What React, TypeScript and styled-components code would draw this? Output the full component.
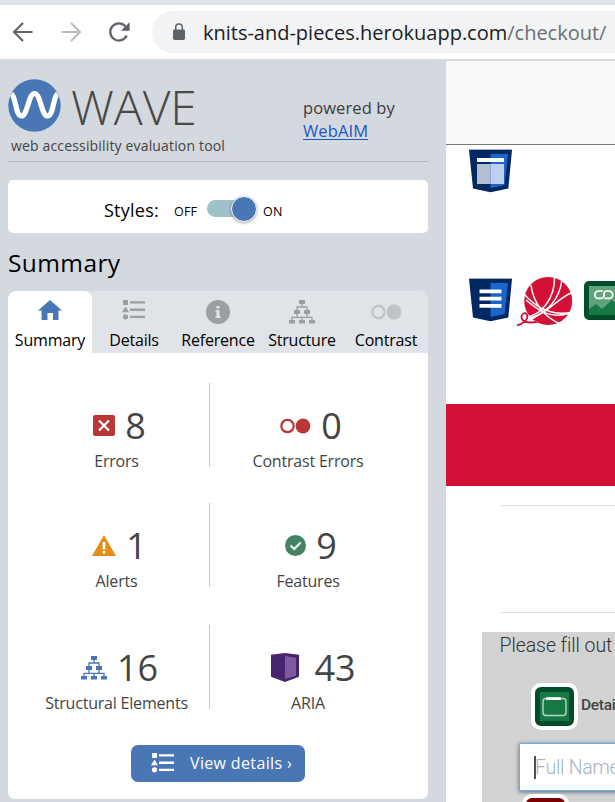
import React from "react";
import styled, { createGlobalStyle } from "styled-components";

const Global = createGlobalStyle`
  * { box-sizing: border-box; }
  body { margin: 0; background: #fff; overflow: hidden; font-family: "Open Sans", sans-serif; }
  svg { display: block; flex: none; }
`;

const Window = styled.div`
  width: 615px; height: 802px; overflow: hidden;
  display: flex; flex-direction: column; background: #fff;
`;
const TabStrip = styled.div`height: 5px; flex: none; background: #dee1e6;`;
const Toolbar = styled.div`
  height: 54px; flex: none; display: flex; align-items: center; padding-left: 10px;
`;
const NavIcons = styled.div`width: 142px; display: flex; gap: 22px; flex: none;`;
const AddressBar = styled.div`
  flex: none; width: 500px; height: 42px; border-radius: 21px; background: #f1f3f4;
  display: flex; align-items: center; padding-left: 20px; gap: 17px;
`;
const Url = styled.div`
  font-size: 20px; line-height: 40px; padding-top: 1px; color: #202124; white-space: nowrap; letter-spacing: -0.01px;
  span { color: #6b6f74; }
`;
const Main = styled.div`flex: 1; display: flex; min-height: 0;`;

const Sidebar = styled.aside`
  width: 446px; flex: none; background: #d4d8df; padding: 0 18px 0 8px;
`;
const Brand = styled.header`
  height: 103px; border-bottom: 1px solid #b3b8ba; display: flex; padding-top: 20px;
`;
const Logo = styled.div`width: 295px;`;
const LogoRow = styled.div`display: flex; gap: 10px; height: 53px;`;
const Wordmark = styled.div`
  font-weight: 300; font-size: 48px; line-height: 56px; color: #484848; height: 53px;
`;
const Tagline = styled.div`
  font-size: 14px; line-height: 28px; color: #444; padding-left: 3px; white-space: nowrap; letter-spacing: 0.16px;
`;
const Powered = styled.div`
  font-size: 16.5px; line-height: 23px; color: #3c3c3c; padding-top: 17px; white-space: nowrap; letter-spacing: 0.1px;
  a { color: #1a56c4; text-decoration: underline; text-underline-offset: 2px; }
`;
const StylesBox = styled.div`
  margin-top: 18px; height: 53px; border-radius: 5px; background: #fff; color: #000;
  display: flex; align-items: center; padding: 6px 0 0 96px; white-space: nowrap;
`;
const StylesLabel = styled.span`font-size: 18px; width: 70px; letter-spacing: 0.25px;`;
const SwitchLabel = styled.span`font-size: 12.5px; line-height: 16px; padding-top: 4px; width: 33px; letter-spacing: 0.2px;`;
const Track = styled.div`
  width: 50px; height: 17px; border-radius: 9px; background: #9fc1ca; display: flex; justify-content: flex-end; align-items: center; margin: -2px 6px 0 0;
`;
const Knob = styled.div`
  width: 26px; height: 26px; border-radius: 50%; background: #4977b6; border: 1px solid #fff; flex: none;
  box-shadow: 0 1px 3px rgba(0,0,0,.35);
`;
const Heading = styled.h2`
  margin: 0; height: 58px; font-weight: 400; font-size: 24.5px; line-height: 60px; color: #000; letter-spacing: 0.4px;
`;
const Tabs = styled.nav`display: flex; height: 62px; border-radius: 8px 8px 0 0; background: #e0e3e7; overflow: hidden;`;
const Tab = styled.div<{ $active?: boolean }>`
  width: 84px; border-radius: 8px 8px 0 0; background: ${p => (p.$active ? "#fff" : "transparent")};
  display: flex; flex-direction: column; align-items: center; font-size: 16px; color: #000; white-space: nowrap;
  line-height: 22px; letter-spacing: -0.2px;
`;
const TabIcon = styled.div<{ $drop?: number }>`height: 38px; padding-top: ${p => 9 + (p.$drop ?? 0)}px;`;
const Panel = styled.section`
  height: 446px; background: #fff; border-radius: 0 0 7px 7px; padding: 30px 22px 0 16px;
`;
const StatRow = styled.div<{ $gap: number }>`
  display: grid; grid-template: 84px / 186px 196px; margin-bottom: ${p => p.$gap}px;
`;
const Stat = styled.div<{ $divided?: boolean }>`
  border-right: ${p => (p.$divided ? "1px solid #c9c9c9" : "0")};
  display: flex; flex-direction: column; align-items: center; color: #444; padding-top: 19px; white-space: nowrap;
  height: 84px;
`;
const StatTop = styled.div<{ $gap?: number; $shift?: number }>`
  display: flex; align-items: center; height: 48px; flex: none; gap: ${p => p.$gap ?? 10}px; padding-left: ${p => p.$shift ?? 6}px;
  svg { margin-top: -1px; }
`;
const Count = styled.span`font-size: 36px; line-height: 48px;`;
const StatLabel = styled.div`font-size: 16px; line-height: 22px; letter-spacing: -0.2px;`;
const ViewButton = styled.div`
  margin: 36px 0 0 107px; width: 174px; height: 37px; border-radius: 7px; background: #4977b6; color: #fff;
  display: flex; align-items: center; padding: 0 0 2px 20px; gap: 15px; font-size: 16px; white-space: nowrap; letter-spacing: 0.35px;
`;

const Page = styled.main`flex: 1; min-width: 0; background: #fff; overflow: hidden; white-space: nowrap;`;
const PageTop = styled.div`height: 86px; border-top: 2px solid #d9dadb; border-bottom: 1px solid #737b70; background: #f9f9f9;`;
const FirstMark = styled.div`height: 133px; padding: 4px 0 0 23px;`;
const BrandMarks = styled.div`height: 126px; padding-left: 23px; display: flex; align-items: flex-start;`;
const YarnSlot = styled.div`margin: -1px 11px 0 4px;`;
const LinkSlot = styled.div`margin-top: 3px;`;
const RedBand = styled.div`height: 82px; background: #d31035;`;
const Rule = styled.div<{ $top: number }>`margin: ${p => p.$top}px 0 0 54px; height: 1px; background: #e2e2e2;`;
const Form = styled.div`margin: 19px 0 0 36px; height: 170px; background: #d3d3d3; font-family: Roboto, sans-serif;`;
const Intro = styled.div`padding-left: 17.5px; height: 51px; font-size: 19.5px; font-weight: 300; line-height: 27px; color: #333; letter-spacing: -0.08px;`;
const Legend = styled.div`padding-left: 49px; display: flex; height: 60px; gap: 3px; font-size: 15.5px; font-weight: 500; line-height: 44px; color: #444; letter-spacing: -0.3px;`;
const Badge = styled.div<{ $color: string }>`
  width: 47px; height: 47px; border: 4px solid #fff; border-radius: 10px; background: ${p => p.$color}; flex: none;
  display: flex; align-items: center; justify-content: center;
`;
const Field = styled.div`
  margin-left: 37px; width: 200px; height: 48px; background: #fff; border: 1px solid #66afe9; border-radius: 1px;
  box-shadow: 0 1px 4px rgba(60,80,110,.8); display: flex; align-items: center; padding-left: 14px;
  font-size: 19.5px; font-weight: 300; color: #a3b4c2; letter-spacing: -0.25px;
`;
const Caret = styled.div`width: 2px; height: 23px; background: #495057; margin-right: -1px;`;
const ErrorSlot = styled.div`padding: 3px 0 0 40px;`;

const Tree = ({ color }: { color: string }) => (
  <svg width="26" height="24" viewBox="0 0 26 24" fill={color}>
    <path d="M10 0h6v4h-6zM5 10h6v4H5zM15 10h6v4h-6zM0 20h6v3.5H0zM10 20h6v3.5h-6zM20 20h6v3.5h-6z" />
    <path d="M13 3v4M8 10.5V7h10v3.5M8 13v4.5M18 13v4.5M3 20v-2.7h20V20M13 17v3" fill="none" stroke={color} strokeWidth="1.3" />
  </svg>
);
const ListIcon = ({ color }: { color: string }) => (
  <svg width="24" height="20" viewBox="0 0 24 20" fill={color}>
    <path d="M1 0h5v5H1zM3.5 6.6L7 12.3H0zM8 1.3h15v2.3H8zM8 8.6h15v2.3H8zM8 15.7h15V18H8z" />
    <circle cx="3.5" cy="16.8" r="2.6" />
  </svg>
);
const Pair = ({ color }: { color: string }) => (
  <svg width="31" height="16" viewBox="0 0 31 16">
    <circle cx="7.5" cy="8" r="6.2" fill="none" stroke={color} strokeWidth="2.2" />
    <circle cx="23" cy="8" r="7.4" fill={color} />
  </svg>
);
const Shield = ({ kind }: { kind: "page" | "lines" }) => (
  <svg width="44" height="44" viewBox="0 0 44 44">
    <path d="M0 1h43L39.300 39.500 21.500 43.300 4 39.500z" fill="#002861" />
    <path d="M0 .5h43" stroke="#9fadc1" />
    <path d="M21.500 5H39l-3.500 31-14 3z" fill="#1b66cc" />
    {kind === "page" ? (
      <>
        <path d="M8 9h27v4H8z" fill="#fff" />
        <path d="M8 15h13.500v20H8z" fill="#b3bfd0" />
        <path d="M21.500 15H35v20H21.500z" fill="#bbd1ef" />
      </>
    ) : (
      <path d="M10.500 11.500h22v3.700h-22zM10.500 18.700h22v3.700h-22zM10.500 26h22v3.700h-22z" fill="#fff" />
    )}
  </svg>
);

export default function App() {
  return (
    <Window>
      <Global />
      <TabStrip />
      <Toolbar>
        <NavIcons>
          <svg width="26" height="26" viewBox="0 0 26 26" fill="none" stroke="#5f6368" strokeWidth="2.1">
            <path d="M22.500 13H4.500M13 4l-9 9 9 9" />
          </svg>
          <svg width="26" height="26" viewBox="0 0 26 26" fill="none" stroke="#babcbe" strokeWidth="2.1">
            <path d="M3.500 13h18M13 4l9 9-9 9" />
          </svg>
          <svg width="26" height="26" viewBox="0 0 26 26">
            <path d="M20.700 16.500A8.600 8.600 0 1 1 19.400 7.300" fill="none" stroke="#5f6368" strokeWidth="2.3" />
            <path d="M23.600 3.200v8.600h-8.700z" fill="#5f6368" />
          </svg>
        </NavIcons>
        <AddressBar>
          <svg width="14" height="18" viewBox="0 0 14 18">
            <rect x="1" y="6.500" width="12" height="10.500" rx="1.400" fill="#5f6368" />
            <path d="M3.700 7V4.200a3.300 3.300 0 0 1 6.600 0V7" fill="none" stroke="#5f6368" strokeWidth="1.5" />
          </svg>
          <Url>knits-and-pieces.herokuapp.com<span>/checkout/</span></Url>
        </AddressBar>
      </Toolbar>
      <Main>
        <Sidebar>
          <Brand>
            <Logo>
              <LogoRow>
                <svg width="53" height="53" viewBox="0 0 53 53">
                  <circle cx="26.500" cy="26.500" r="26.200" fill="#4977b6" />
                  <path d="M3.500 15C8 18 7.500 37 13.500 37S20.500 14.500 26.500 14.500 33.500 37 39.500 37 45 18 49.500 15" fill="none" stroke="#fff" strokeWidth="5.200" />
                </svg>
                <Wordmark>WAVE</Wordmark>
              </LogoRow>
              <Tagline>web accessibility evaluation tool</Tagline>
            </Logo>
            <Powered>powered by<br /><a>WebAIM</a></Powered>
          </Brand>
          <StylesBox>
            <StylesLabel>Styles:</StylesLabel>
            <SwitchLabel>OFF</SwitchLabel>
            <Track><Knob /></Track>
            <SwitchLabel>ON</SwitchLabel>
          </StylesBox>
          <Heading>Summary</Heading>
          <Tabs>
            <Tab $active>
              <TabIcon>
                <svg width="24" height="21" viewBox="0 0 24 21" fill="#4977b6">
                  <path d="M12 0l12 10.500h-3.500V20h-5.500v-7H9.500v7H3.500V10.500H0z" />
                </svg>
              </TabIcon>
              Summary
            </Tab>
            <Tab><TabIcon><ListIcon color="#9c9fa2" /></TabIcon>Details</Tab>
            <Tab>
              <TabIcon>
                <svg width="24" height="24" viewBox="0 0 24 24">
                  <circle cx="12" cy="12" r="12" fill="#9c9fa2" />
                  <path d="M10.500 6h3v2.500h-3zM9.500 10h4v6.500h1.300V18H9.300v-1.500h1.200v-5h-1z" fill="#e0e3e7" />
                </svg>
              </TabIcon>
              Reference
            </Tab>
            <Tab><TabIcon><Tree color="#9c9fa2" /></TabIcon>Structure</Tab>
            <Tab><TabIcon $drop={4}><Pair color="#bfc2c6" /></TabIcon>Contrast</Tab>
          </Tabs>
          <Panel>
            <StatRow $gap={36}>
              <Stat $divided>
                <StatTop>
                  <svg width="22" height="21" viewBox="0 0 22 21">
                    <rect width="22" height="21" rx="2" fill="#b93737" />
                    <path d="M6 5.500l10 10M16 5.500l-10 10" stroke="#fff" strokeWidth="2.200" />
                  </svg>
                  <Count>8</Count>
                </StatTop>
                <StatLabel>Errors</StatLabel>
              </Stat>
              <Stat>
                <StatTop><Pair color="#b93737" /><Count>0</Count></StatTop>
                <StatLabel>Contrast Errors</StatLabel>
              </Stat>
            </StatRow>
            <StatRow $gap={38}>
              <Stat $divided>
                <StatTop>
                  <svg width="24" height="21" viewBox="0 0 24 21">
                    <path d="M12 0l12 21H0z" fill="#e28f17" />
                    <path d="M10.700 7h2.600v7.500h-2.600zM10.700 16h2.600v2.500h-2.600z" fill="#fff" />
                  </svg>
                  <Count>1</Count>
                </StatTop>
                <StatLabel>Alerts</StatLabel>
              </Stat>
              <Stat>
                <StatTop>
                  <svg width="21" height="21" viewBox="0 0 21 21">
                    <circle cx="10.500" cy="10.500" r="10.500" fill="#448465" />
                    <path d="M5.500 10.500l3.700 3.500 6.500-6.500" fill="none" stroke="#fff" strokeWidth="2" />
                  </svg>
                  <Count>9</Count>
                </StatTop>
                <StatLabel>Features</StatLabel>
              </Stat>
            </StatRow>
            <StatRow $gap={0}>
              <Stat $divided>
                <StatTop><Tree color="#4977b6" /><Count>16</Count></StatTop>
                <StatLabel>Structural Elements</StatLabel>
              </Stat>
              <Stat>
                <StatTop $gap={15} $shift={11}>
                  <svg width="28" height="29" viewBox="0 0 28 29">
                    <path d="M0 1.800L14 0l14 1.800v22L14 29 0 23.800z" fill="#48246f" />
                    <path d="M14 3l11 1.700v18.100L14 26z" fill="#7f5a9f" />
                  </svg>
                  <Count>43</Count>
                </StatTop>
                <StatLabel>ARIA</StatLabel>
              </Stat>
            </StatRow>
            <ViewButton><ListIcon color="#fff" />View details ›</ViewButton>
          </Panel>
        </Sidebar>
        <Page>
          <PageTop />
          <FirstMark><Shield kind="page" /></FirstMark>
          <BrandMarks>
            <Shield kind="lines" />
            <YarnSlot>
              <svg width="56" height="50" viewBox="0 0 56 50" fill="none">
                <circle cx="31.200" cy="24" r="24" fill="#d31035" />
                <g stroke="#fff" strokeWidth="1.500">
                  <path d="M14 8C16 25 27 41 44 47M7 17C21 33 38 39 56 35M37.500 0C38 20 26 37 10 40M45 3C42 24 29 36 12 41.500M54 16C40 22 32 35 13 42.500M9 23C20 32 32 43 53 36" />
                </g>
                <path d="M4 47Q10 44.500 20 46" stroke="#fff" strokeWidth="4" />
                <path d="M0 48.500C6 47 12 42 10 37.500 8 34 3 38 5 42S13 46 20 45" stroke="#d31035" strokeWidth="1.800" />
              </svg>
            </YarnSlot>
            <LinkSlot>
              <svg width="40" height="40" viewBox="0 0 40 40">
                <rect width="40" height="39" rx="5" fill="#004d29" />
                <path d="M5 5h30v29H5z" fill="#5fa37c" />
                <path d="M5 28l7-5 6 5 10-9 7 7v8H5z" fill="#177846" />
                <path d="M19 10h-4.500a3.700 3.700 0 0 0 0 7.400H17a3 3 0 0 0 3-3v-.7M20.500 17.400H25a3.700 3.700 0 0 0 0-7.400h-2a3 3 0 0 0-3 3v.8" fill="none" stroke="#fff" strokeWidth="1.700" />
              </svg>
            </LinkSlot>
          </BrandMarks>
          <RedBand />
          <Rule $top={19} />
          <Rule $top={106} />
          <Form>
            <Intro>Please fill out</Intro>
            <Legend>
              <Badge $color="#004d29">
                <svg width="29" height="29" viewBox="0 0 29 29">
                  <path d="M0 0h29v29H0z" fill="#177846" />
                  <rect x="3" y="6.500" width="23" height="17" rx="3" fill="none" stroke="#b7d6c5" strokeWidth="1.400" />
                  <path d="M6 5.200h15v2.800H6z" fill="#fff" />
                </svg>
              </Badge>
              Details
            </Legend>
            <Field><Caret />Full Name</Field>
            <ErrorSlot><Badge $color="#7b0000" /></ErrorSlot>
          </Form>
        </Page>
      </Main>
    </Window>
  );
}
